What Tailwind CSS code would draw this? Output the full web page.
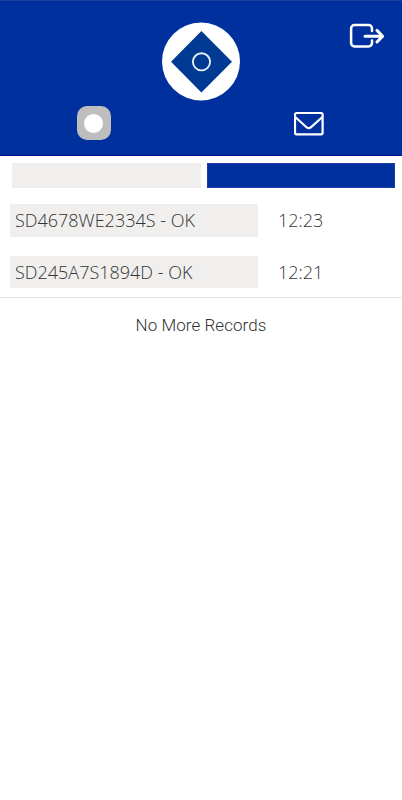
<!DOCTYPE html>
<html lang="en">
<head>
<meta charset="utf-8">
<title>Records</title>
<script src="https://cdn.jsdelivr.net/npm/@tailwindcss/browser@4"></script>
</head>
<body class="min-h-screen bg-white text-[#333] font-['Open_Sans',sans-serif] font-light">
<header class="h-[156px] bg-[#00309e] border-b border-[#000f8c] border-t border-t-[#1c429c]">
  <div class="grid grid-cols-[1fr_80px_1fr] h-[100px]">
    <span></span>
    <svg class="mt-[21px] ml-px" width="78" height="79" viewBox="0 0 78 79" fill="none">
      <circle cx="39" cy="39.5" r="39" fill="#fff"/>
      <path d="M39.4 9 70 39.8 39.4 70.5 9 39.8Z" fill="#003a92"/>
      <circle cx="39.5" cy="39.8" r="8.6" stroke="#e8effc" stroke-width="1.9"/>
    </svg>
    <svg class="mt-[22px] ml-auto mr-[17px]" width="36" height="26" viewBox="0 0 36 26" fill="none" stroke="#fff" stroke-width="2.5" stroke-linecap="round" stroke-linejoin="round">
      <path d="M23 8V5.4A3.3 3.3 0 0 0 19.7 2.1H5.4A3.3 3.3 0 0 0 2.1 5.4V20.1A3.3 3.3 0 0 0 5.4 23.4H19.7A3.3 3.3 0 0 0 23 20.1V17.6"/>
      <path d="M16 13.2H33.6M28 7.4 33.6 13.2 28 19" stroke-width="3"/>
    </svg>
  </div>
  <div class="flex justify-between pl-[77px] pr-[78px] pt-[5px]">
    <div class="w-[34px] h-[34px] rounded-[10px] bg-[#bebebe] flex items-center pl-[7.3px]">
      <div class="w-[19px] h-[19px] rounded-full bg-white"></div>
    </div>
    <svg class="mt-[5px]" width="30" height="25" viewBox="0 0 30 25" fill="none" stroke="#fff" stroke-width="2.2" stroke-linejoin="round">
      <rect x="1" y="2" width="27.6" height="21.3" rx="1.5"/>
      <path d="M1.5 6.3 12.5 16.2Q14.8 18.2 17.1 16.2L28.1 6.3"/>
    </svg>
  </div>
</header>
<main>
  <div class="grid grid-cols-[189px_188px] gap-[6px] pl-3 pt-[7px]">
    <div class="h-[25px] bg-[#f0efee]"></div>
    <div class="h-[25px] bg-[#00309e] border border-[#1c3ba6]"></div>
  </div>
  <div class="flex flex-col gap-[19px] pt-4 pb-[9px] border-b border-[#e6e6e6] text-[18px] leading-8">
    <div class="flex pl-[10px]">
      <div class="w-[248px] h-[33px] bg-[#f0efee] pl-[5px]"><span>SD4678WE2334S - OK</span></div>
      <span class="ml-5">12:23</span>
    </div>
    <div class="flex pl-[10px]">
      <div class="w-[248px] h-8 bg-[#f0efee] pl-[5px]"><span>SD245A7S1894D - OK</span></div>
      <span class="ml-5">12:21</span>
    </div>
  </div>
  <p class="pt-[15px] text-center font-['Roboto',sans-serif] text-[17px] tracking-[0.05px] leading-6">No More Records</p>
</main>
</body>
</html>
